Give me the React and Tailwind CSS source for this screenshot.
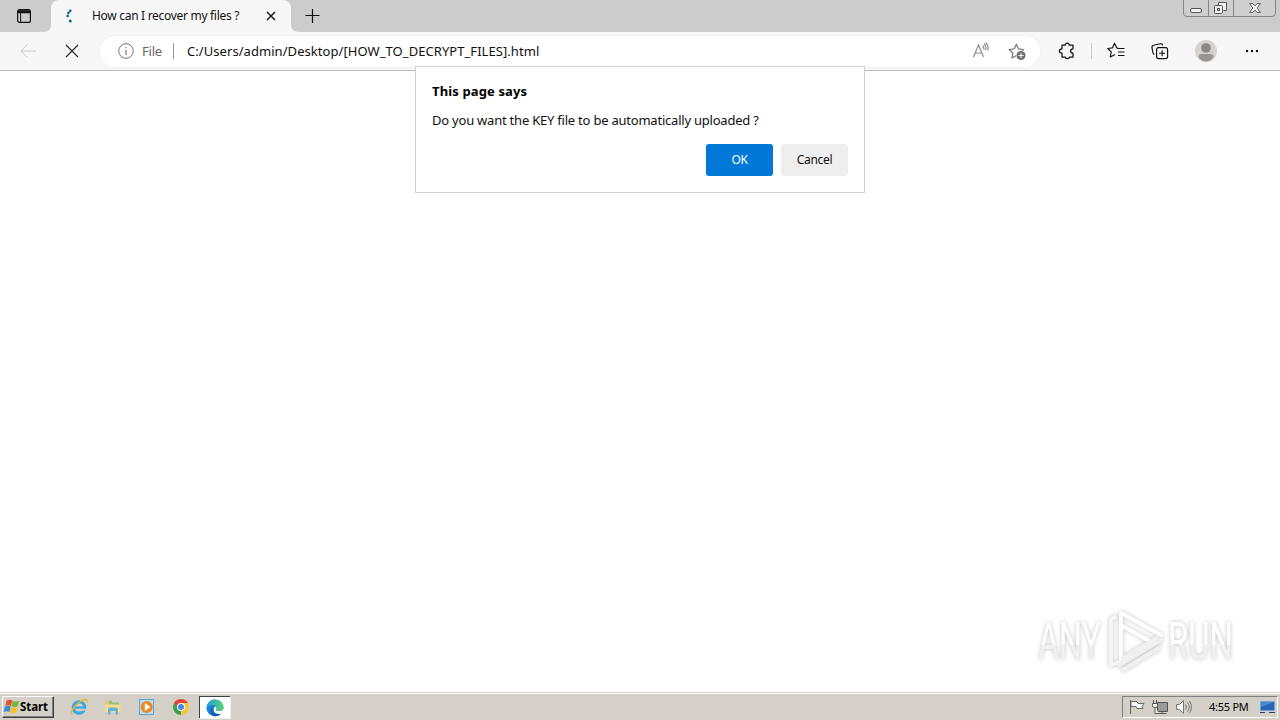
import React from 'react';

const STAR = 'M8 1.5l2 4.3 4.7.6-3.5 3.2.9 4.7L8 12l-4.1 2.3.9-4.7L1.3 6.4 6 5.8z';

const WindowControls = () => (
  <svg className="h-[18px] w-[94px]" viewBox="0 0 94 18" fill="none">
    <path d="M.5 0v13q0 3.500 3.500 3.500h85q3.500 0 3.500-3.500V0" fill="#cfcfcf" stroke="#858585" />
    <path d="M25.500 0v16M50.500 0v16" stroke="#858585" />
    <rect x="7.500" y="8.500" width="11" height="4" rx="1.500" fill="#f2f2f2" stroke="#555" />
    <path d="M35.500 5.500v-3h8v8h-3" fill="#eee" stroke="#555" />
    <rect x="31.500" y="5.500" width="8" height="8" rx="1" fill="#eee" stroke="#555" />
    <rect x="34.500" y="8.500" width="2" height="2" stroke="#555" />
    <path d="M66.500 3.500h3.300l2.200 2.400 2.200-2.400h3.300L74.200 8l3.300 4.500h-3.300L72 10.100l-2.200 2.400h-3.300L69.800 8z" fill="#eee" stroke="#666" />
  </svg>
);

const TabStrip = () => (
  <div className="flex h-8 bg-[#cccccc]">
    <div className="flex h-8 w-[43px] items-center pl-4">
      <svg className="h-4 w-4" viewBox="0 0 16 16" fill="none" stroke="#111">
        <rect x="1.600" y="1.600" width="12.800" height="12.800" rx="2" strokeWidth="1.200" />
        <path d="M2 3h12M2 4.500h12" strokeWidth="1.500" />
        <path d="M4.600 5v9" />
      </svg>
    </div>
    <svg className="h-8 w-2" viewBox="0 0 8 32"><path d="M8 24v8H0q8 0 8-8z" fill="#f7f7f7" /></svg>
    <div className="flex h-8 w-[240px] items-center rounded-t-lg bg-[#f7f7f7] pr-3 pl-[11px]">
      <svg className="h-4 w-4" viewBox="0 0 16 16">
        <path d="M4 0h6v16H4z" fill="#edf7fc" />
        <g fill="#245f8c">
          <circle cx="8.300" cy="2.800" r="1.400" />
          <circle cx="6.500" cy="4.800" r="1.400" />
          <circle cx="5.700" cy="7.900" r="1.300" />
          <circle cx="8.300" cy="13" r="1.500" />
        </g>
      </svg>
      <span className="ml-[14px] w-[174px] shrink-0 text-[12px] tracking-[-0.3px] whitespace-nowrap text-[#111]">How can I recover my files ?</span>
      <svg className="h-[10px] w-[10px] shrink-0" viewBox="0 0 10 10" stroke="#111" strokeWidth="1.400"><path d="M1 1l8 8M9 1L1 9" /></svg>
    </div>
    <svg className="h-8 w-2" viewBox="0 0 8 32"><path d="M0 24v8h8q-8 0-8-8z" fill="#f7f7f7" /></svg>
    <svg className="mt-2 ml-[6px] h-4 w-4" viewBox="0 0 16 16" stroke="#111" strokeWidth="1.200"><path d="M7.500 1v14M.5 7.500h14" /></svg>
    <div className="mr-[3px] ml-auto"><WindowControls /></div>
  </div>
);

const AddressBar = () => (
  <div className="flex h-[31px] w-[940px] items-center rounded-full bg-white pr-[13px] pl-[18px] shadow-[0_0_0_1px_#f2f2f2]">
    <svg className="h-4 w-4" viewBox="0 0 16 16" fill="none" stroke="#777">
      <circle cx="8" cy="8" r="7.300" />
      <path d="M8 7v5M8 4v1.300" strokeWidth="1.200" />
    </svg>
    <span className="ml-2 w-[22px] pt-px text-[13px] tracking-[-0.2px] text-[#666]">File</span>
    <div className="ml-[9px] h-4 w-px bg-[#999]" />
    <span className="ml-[13px] pt-px text-[13px] tracking-[0.06px] whitespace-nowrap text-[#111]">C:/Users/admin/Desktop/[HOW_TO_DECRYPT_FILES].html</span>
    <svg className="ml-auto h-[18px] w-[18px]" viewBox="0 0 18 18" fill="none" stroke="#888" strokeWidth="1.100">
      <path d="M1.500 15L6.500 3l5 12M3.200 11h6.600M10.500 3.500q2 2 1.500 4.500M12 1.500q2.400 2.400 1.800 6.500M13.800.5q3 3.200 2 8" />
    </svg>
    <svg className="ml-[18px] h-[19px] w-[19px]" viewBox="0 0 19 19" fill="none">
      <path d={STAR} stroke="#777" strokeWidth="1.100" strokeLinejoin="round" transform="translate(-.3 .6) scale(1.080)" />
      <circle cx="13" cy="13.500" r="5" fill="#fff" />
      <circle cx="13" cy="13.500" r="4.500" fill="#707070" />
      <path d="M13 11v5M10.500 13.500h5" stroke="#fff" />
    </svg>
  </div>
);

const Toolbar = () => (
  <div className="flex h-[39px] items-center border-b border-[#b9b9b9] bg-[#f7f7f7]">
    <svg className="ml-5 h-4 w-4" viewBox="0 0 16 16" fill="none" stroke="#cacaca"><path d="M16 8H1M7.500 1.500L1 8l6.500 6.500" /></svg>
    <svg className="ml-[29px] h-[14px] w-[14px]" viewBox="0 0 14 14" stroke="#222" strokeWidth="1.100"><path d="M1 1l12 12M13 1L1 13" /></svg>
    <div className="ml-[21px]"><AddressBar /></div>
    <svg className="ml-[18px] h-[18px] w-[18px]" viewBox="0 0 18 18" fill="none" stroke="#111" strokeWidth="1.250" strokeLinejoin="round">
      <path d="M4 3h3.300q0-1.800 1.900-1.800T11.100 3H15v3.800q-2.400 0-2.400 2.200T15 11.200V15h-3.500q-.2 1.700-2.100 1.700T7.300 15H4v-3.800q-2.600-.1-2.600-2.200T4 6.800z" />
    </svg>
    <div className="ml-[15px] h-4 w-px bg-[#ccc]" />
    <svg className="ml-[15px] h-[18px] w-[18px]" viewBox="0 0 18 18" fill="none" stroke="#111" strokeWidth="1.150">
      <path d="M11.500 6.500L9.800 5.900 7.500 1.300 5.400 5.900.7 6.500l3.500 3.400-.9 5L8 12.600M10.500 6.500h7M11 10h6.500M11 13.500h6.500" strokeLinejoin="round" />
    </svg>
    <svg className="ml-[26px] h-[18px] w-[18px]" viewBox="0 0 18 18" fill="none" stroke="#111" strokeWidth="1.150">
      <rect x="5.600" y="5.600" width="11" height="11" rx="2" />
      <path d="M11.100 8.200v6M8.100 11.200h6M3.500 12.500Q2 12 1.700 10L1 5.500q-.2-2 1.700-2.300l6.500-1.500q2-.3 2.500 1.800" />
    </svg>
    <svg className="ml-[26px] h-[22px] w-[22px]" viewBox="0 0 22 22">
      <circle cx="11" cy="11" r="11" fill="#d5d2d0" />
      <circle cx="11" cy="8" r="4.800" fill="#8b8887" />
      <path d="M3.500 17q0-3 3-3h9q3 0 3 3-3 4.500-7.500 4.500T3.500 17z" fill="#999594" />
    </svg>
    <svg className="ml-[28px] h-4 w-4" viewBox="0 0 16 16" fill="#111">
      <circle cx="2" cy="8" r="1.250" /><circle cx="7" cy="8" r="1.250" /><circle cx="12" cy="8" r="1.250" />
    </svg>
  </div>
);

const ConfirmDialog = () => (
  <div className="absolute top-[66px] left-[415px] h-[127px] w-[450px] border border-[#d2d2d2] bg-white px-4 text-[#111]">
    <h1 className="mt-[15px] text-[13px] leading-[18px] font-bold tracking-[0.13px] text-black">This page says</h1>
    <p className="mt-[11px] text-[13px] leading-[18px] tracking-[-0.220px] whitespace-nowrap">Do you want the KEY file to be automatically uploaded ?</p>
    <div className="mt-[15px] flex justify-end gap-2 text-[12px] tracking-[-0.3px]">
      <button type="button" className="h-8 w-[67px] rounded-[3px] bg-[#0078d7] text-white">OK</button>
      <button type="button" className="h-8 w-[67px] rounded-[3px] bg-[#eeeeee]">Cancel</button>
    </div>
  </div>
);

const Watermark = () => (
  <div className="absolute top-[608px] left-[1036px]">
    <svg className="h-[66px] w-[200px] overflow-visible drop-shadow-[0_0_2px_rgba(0,0,0,0.24)]" viewBox="0 0 200 66">
      <defs>
        <linearGradient id="mark" x1="0" y1="0" x2="0" y2="1">
          <stop offset="0.540" stopColor="#fff" />
          <stop offset="0.560" stopColor="#f0f0f0" />
        </linearGradient>
      </defs>
      <g fill="url(#mark)" fontFamily="Roboto, sans-serif" fontWeight="400" fontSize="52">
        <text x="2" y="51" textLength="63" lengthAdjust="spacingAndGlyphs">ANY</text>
        <text x="132" y="51" textLength="65" lengthAdjust="spacingAndGlyphs">RUN</text>
      </g>
      <g fill="none" strokeLinejoin="round" strokeLinecap="round" strokeWidth="4">
        <path d="M79 9l-4 2v46l8-3" stroke="#f6f6f6" />
        <path d="M85 51V5l40 22M85 17l32 18" stroke="#fff" />
        <path d="M83 57l42-25M87 50l34-20M87 62l36-22" stroke="#f0f0f0" />
      </g>
    </svg>
  </div>
);

const WindowsFlag = () => (
  <svg className="h-4 w-[17px]" viewBox="0 0 17 16">
    <path d="M3.700 1.500q3-1.500 5.600 0L7.900 7Q5 5.500 2.200 7z" fill="#e5532b" />
    <path d="M9.700 1.800q3.300 1.500 6.600 0l-1.500 5.500q-3 1.500-6.500 0z" fill="#77b843" />
    <path d="M2 7.500q3-1.500 5.800 0L6.300 13Q3.500 11.500.5 13z" fill="#3b8dd2" />
    <path d="M8.200 7.900q3.300 1.500 6.500 0l-1.500 5.500q-3 1.500-6.500 0z" fill="#f6c12c" />
  </svg>
);

const EdgeLogo = () => (
  <svg className="h-[18px] w-[18px]" viewBox="0 0 18 18">
    <defs>
      <linearGradient id="edge" x1="0" x2="1">
        <stop stopColor="#229ee0" />
        <stop offset="1" stopColor="#58d36b" />
      </linearGradient>
    </defs>
    <circle cx="9" cy="9" r="8.500" fill="#1b84d2" />
    <path d="M.5 9Q1.500.5 9 .5q8 .5 8.500 7.500 0 4-5 4-3 0-2.300-1.500Q11.500 8 9 6.500 5 4.500.5 9z" fill="url(#edge)" />
    <path d="M7 8q-2 3.500 1 6.200 3 2 8-.7-3 4-7.500 3.500Q3.500 15 5 10q.7-1.500 2-2z" fill="#1557a5" />
    <path d="M9.500 7.500q1.800 1.500.7 3-.7 1.700 2.500 1.600 2.500-.1 5.300-1.900v3.300q-2.500 2-5.500 1.500-4.500-.7-4.800-4 0-2.700 1.800-3.500z" fill="#fff" />
  </svg>
);

const QuickLaunch = () => (
  <div className="flex items-center">
    <svg className="ml-[16px] h-[18px] w-[18px]" viewBox="0 0 18 18" fill="none">
      <circle cx="9" cy="9.500" r="5.700" stroke="#39a9e5" strokeWidth="3.200" />
      <path d="M5 9.500h11" stroke="#39a9e5" strokeWidth="2.300" />
      <path d="M11 11.700h6" stroke="#d4d0c8" strokeWidth="1.800" />
      <path d="M2 16.500Q-.5 14.500 5 8.500T15 1.500q3-.5 1.500 3" stroke="#e8b72e" strokeWidth="1.500" />
    </svg>
    <svg className="ml-4 h-[18px] w-[18px]" viewBox="0 0 18 18">
      <path d="M1 3h6l1 2h8v9H1z" fill="#e8c868" />
      <path d="M5 2.500h3v2h7v5H5z" fill="#8dc37a" />
      <path d="M1 6.500h16V14H1z" fill="#f4dc8c" />
      <path d="M4 16.500v-4.800Q4 9.500 6 9.500h6q2 0 2 2.200v4.800h-2.500V13h-5v3.500z" fill="#65b1da" />
    </svg>
    <svg className="ml-4 h-[18px] w-[18px]" viewBox="0 0 18 18">
      <rect x="1.500" y="1.500" width="14" height="15" fill="#b8def4" stroke="#5ba6d5" />
      <circle cx="8.700" cy="9" r="6" fill="#ef881f" />
      <path d="M6.800 5l5.700 4-5.700 4z" fill="#fff" />
    </svg>
    <svg className="ml-4 h-[18px] w-[18px]" viewBox="0 0 18 18">
      <path d="M9 9L2.100 5A8 8 0 0 1 15.900 5z" fill="#df4538" />
      <path d="M9 9l6.900-4A8 8 0 0 1 9 17z" fill="#f8c72e" />
      <path d="M9 9v8A8 8 0 0 1 2.100 5z" fill="#35a353" />
      <path d="M9 5h6.900L13 10z" fill="#f8c72e" />
      <path d="M2.100 5h7L5 9z" fill="#df4538" />
      <circle cx="9" cy="9" r="4" fill="#fff" />
      <circle cx="9" cy="9" r="3" fill="#4284e8" />
    </svg>
    <div className="ml-[9px] flex h-[22px] w-[31px] items-center justify-center border-t border-l border-[#404040] bg-white shadow-[1px_1px_0_#eee]">
      <EdgeLogo />
    </div>
  </div>
);

const SystemTray = () => (
  <div className="mr-0.5 ml-auto flex h-[22px] w-[156px] items-center border border-t-[#808080] border-r-white border-b-white border-l-[#808080] pl-[5px]">
    <svg className="h-[18px] w-[18px]" viewBox="0 0 18 18" fill="#fafafa" stroke="#666">
      <path d="M2.500 2v14M3 3.500h6l1 2h6l-2 3 1 2H9l-1-2H3z" />
    </svg>
    <svg className="ml-[5px] h-[18px] w-[18px]" viewBox="0 0 18 18" fill="#fafafa" stroke="#555">
      <path d="M6.500 4.500h10v9h-10z" fill="#999" />
      <path d="M5.500 15.500h10M11 13v2" />
      <path d="M2.500 2v3M5.500 2v3M1.500 5.500h5v2q0 2-2 2h-1q-2 0-2-2zM4 9.500v6h4" />
    </svg>
    <svg className="ml-[6px] h-[18px] w-[18px]" viewBox="0 0 18 18" fill="none" stroke="#777">
      <path d="M1.500 6.500h3l4-4v13l-4-4h-3z" fill="#fafafa" />
      <path d="M10.500 6.500q2 2.500 0 5M12.500 4.500q3.500 4.500 0 9M14.500 3q4 6 0 12" />
    </svg>
    <span className="ml-[16px] w-[42px] text-[11px] tracking-[-0.25px] whitespace-nowrap text-black">4:55 PM</span>
    <svg className="ml-[8px] h-4 w-[17px]" viewBox="0 0 17 16">
      <path d="M1 2h15v10H1z" fill="#2866b5" stroke="#c4d5e4" />
      <path d="M2 3h13L2 8z" fill="#4889cd" />
      <path d="M1 13.500h5M10 13.500h6" stroke="#263f60" />
    </svg>
  </div>
);

const Taskbar = () => (
  <div className="flex h-[28px] items-center border-t border-[#d4d0c8] bg-[#d4d0c8] pt-px shadow-[inset_0_1px_0_#fff]">
    <button type="button" className="ml-0.5 flex h-[22px] w-[52px] items-center border border-t-white border-r-[#404040] border-b-[#404040] border-l-white shadow-[inset_-1px_-1px_0_#808080]">
      <WindowsFlag />
      <span className="text-[11.500px] font-bold tracking-[-0.1px] text-black">Start</span>
    </button>
    <QuickLaunch />
    <SystemTray />
  </div>
);

const App = () => (
  <div className="relative flex h-[720px] w-[1280px] flex-col overflow-hidden bg-white font-['Noto_Sans',sans-serif]">
    <TabStrip />
    <Toolbar />
    <main className="flex-1" />
    <Taskbar />
    <ConfirmDialog />
    <Watermark />
  </div>
);

export default App;
